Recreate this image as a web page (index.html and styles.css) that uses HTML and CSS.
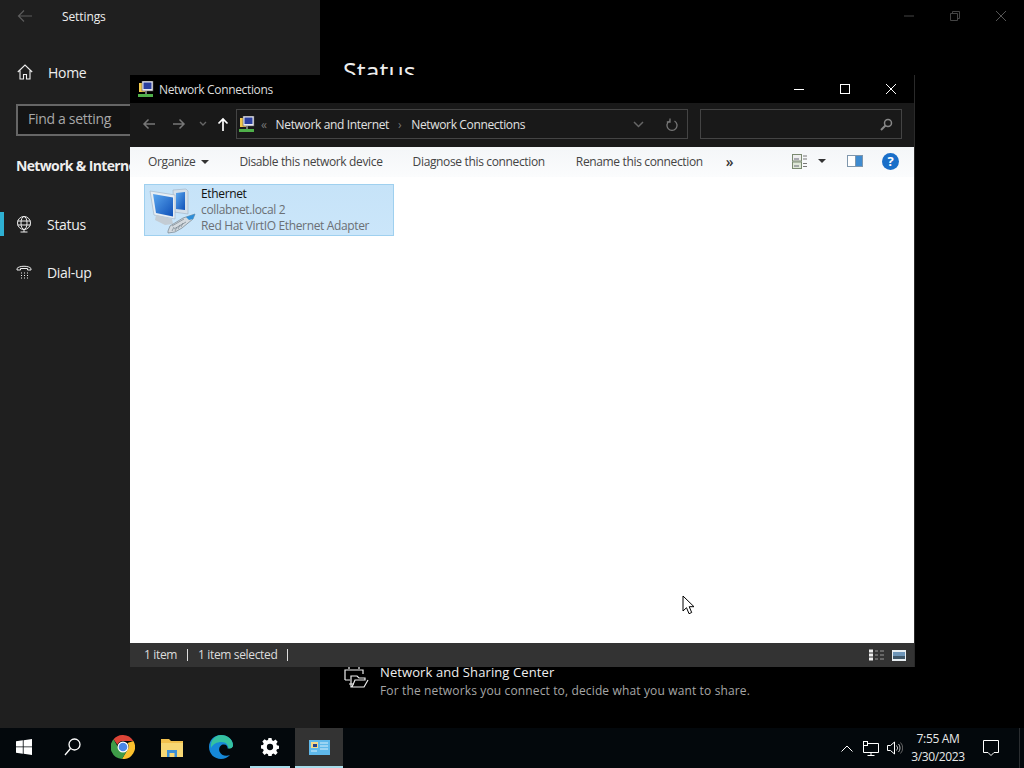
FILE: index.html
```html
<!DOCTYPE html>
<html lang="en">
<head>
  <meta charset="UTF-8">
  <title>Network Connections</title>
  <link rel="stylesheet" href="styles.css">
</head>
<body>
  <svg class="defs" width="0" height="0" aria-hidden="true">
    <defs>
      <symbol id="net-icon" viewBox="0 0 16 16">
        <rect x="1" y="2" width="6" height="9" fill="#f2c94c"/>
        <rect x="4" y="0" width="11" height="10" fill="#e8e8f0" stroke="#555" stroke-width=".6"/>
        <rect x="5.500" y="1.500" width="8" height="6.500" fill="#2b3f9e"/>
        <rect x="7" y="10" width="2" height="3" fill="#777"/>
        <rect x="0" y="13" width="15" height="3" fill="#4fb04a"/>
      </symbol>
      <linearGradient id="screen-blue" x1="0" y1="0" x2="1" y2="1">
        <stop offset="0" stop-color="#5aa6ee"/>
        <stop offset="1" stop-color="#0f50b8"/>
      </linearGradient>
    </defs>
  </svg>

  <!-- Settings window behind -->
  <div class="settings">
    <aside class="sidebar">
      <div class="settings-title">
        <svg class="back-arrow" width="16" height="14" viewBox="0 0 16 14"><path d="M15 7H2M7 1.500 1.500 7 7 12.500" fill="none" stroke="#5c5c5c" stroke-width="1.200"/></svg>
        <span>Settings</span>
      </div>
      <div class="home-link">
        <svg width="16" height="16" viewBox="0 0 16 16"><path d="M.8 8 8 1l7.200 7M3 6.500V15h3.500v-4.500h3V15H13V6.500" fill="none" stroke="#eee" stroke-width="1.100"/></svg>
        <span>Home</span>
      </div>
      <div class="find-box">Find a setting</div>
      <div class="side-heading">Network &amp; Internet</div>
      <div class="side-item side-item-active">
        <svg width="16" height="17" viewBox="0 0 16 17"><circle cx="8" cy="7" r="6.500" fill="none" stroke="#eee"/><ellipse cx="8" cy="7" rx="3" ry="6.500" fill="none" stroke="#eee"/><path d="M1.500 5h13M1.500 9h13M8 13.500V16M4.500 16h7" fill="none" stroke="#eee"/></svg>
        <span>Status</span>
      </div>
      <div class="side-item">
        <svg width="16" height="14" viewBox="0 0 16 14"><path d="M1 5V3.500C3 .5 13 .5 15 3.500V5h-3.500V3.500h-7V5Z" fill="none" stroke="#eee"/><path d="M5 8h1M8 8h1M11 8h1M5 10.500h1M8 10.500h1M11 10.500h1M5 13h1M8 13h1M11 13h1" stroke="#eee"/></svg>
        <span>Dial-up</span>
      </div>
    </aside>
    <main class="settings-main">
      <div class="win-controls-dim">
        <svg width="10" height="10" viewBox="0 0 10 10"><path d="M0 5h10" stroke="#444"/></svg>
        <svg width="10" height="10" viewBox="0 0 10 10"><path d="M.5 2.500h7v7h-7zM2.500 2.500v-2h7v7h-2" fill="none" stroke="#444"/></svg>
        <svg width="10" height="10" viewBox="0 0 10 10"><path d="m0 0 10 10M10 0 0 10" stroke="#555"/></svg>
      </div>
      <h1 class="status-title">Status</h1>
      <div class="sharing-link">
        <svg width="26" height="26" viewBox="0 0 26 26"><path d="M6 6V1h10v5M2 17V7h18v4M2 17h5M6 21h5" fill="none" stroke="#eee" stroke-width="1.200"/><path d="M8 13h6l2 2h6v2H12l-3 7H8ZM9 24h12l4-7" fill="none" stroke="#eee" stroke-width="1.200"/></svg>
        <div>
          <div class="sharing-name">Network and Sharing Center</div>
          <div class="sharing-desc">For the networks you connect to, decide what you want to share.</div>
        </div>
      </div>
    </main>
  </div>

  <!-- Explorer window on top -->
  <section class="explorer">
    <header class="ex-titlebar">
      <svg class="ex-icon" width="16" height="16"><use href="#net-icon"/></svg>
      <span class="ex-title">Network Connections</span>
      <div class="ex-controls">
        <svg width="12" height="12" viewBox="0 0 12 12"><path d="M1 6.500h10" stroke="#fff"/></svg>
        <svg width="12" height="12" viewBox="0 0 12 12"><rect x="1.500" y="1.500" width="9" height="9" fill="none" stroke="#fff"/></svg>
        <svg width="12" height="12" viewBox="0 0 12 12"><path d="m1 1 10 10M11 1 1 11" stroke="#fff"/></svg>
      </div>
    </header>

    <div class="ex-address">
      <div class="ex-nav">
        <svg width="14" height="12" viewBox="0 0 14 12"><path d="M13 6H2M6.500 1.500 2 6l4.500 4.500" fill="none" stroke="#777" stroke-width="1.500"/></svg>
        <svg width="14" height="12" viewBox="0 0 14 12"><path d="M1 6h11M7.500 1.500 12 6l-4.500 4.500" fill="none" stroke="#777" stroke-width="1.500"/></svg>
        <svg width="8" height="6" viewBox="0 0 8 6"><path d="m1 1 3 3 3-3" fill="none" stroke="#666" stroke-width="1.400"/></svg>
        <svg width="12" height="14" viewBox="0 0 12 14"><path d="M6 14V2M1.500 6.500 6 2l4.500 4.500" fill="none" stroke="#fff" stroke-width="1.700"/></svg>
      </div>
      <div class="ex-path">
        <svg width="16" height="16"><use href="#net-icon"/></svg>
        <span class="crumb-sep crumb-first">«</span>
        <span class="crumb">Network and Internet</span>
        <span class="crumb-sep">›</span>
        <span class="crumb">Network Connections</span>
        <svg class="path-chevron" width="11" height="7" viewBox="0 0 11 7"><path d="m1 1 4.500 4.500L10 1" fill="none" stroke="#666" stroke-width="1.500"/></svg>
        <svg class="path-refresh" width="12" height="13" viewBox="0 0 12 13"><path d="M3.500 3A5 5 0 1 0 8.500 3M4 .5V4H.8" fill="none" stroke="#777" stroke-width="1.300"/></svg>
      </div>
      <div class="ex-search">
        <svg width="13" height="13" viewBox="0 0 13 13"><circle cx="8" cy="5" r="3.500" fill="none" stroke="#888" stroke-width="1.500"/><path d="M5.500 7.500 1 12" stroke="#888" stroke-width="2"/></svg>
      </div>
    </div>

    <div class="ex-toolbar">
      <span class="tool tool-organize">Organize<i class="caret"></i></span>
      <span class="tool tool-disable">Disable this network device</span>
      <span class="tool tool-diagnose">Diagnose this connection</span>
      <span class="tool tool-rename">Rename this connection</span>
      <span class="tool-more">»</span>
      <div class="tool-icons">
        <svg width="15" height="15" viewBox="0 0 15 15"><rect x=".5" y=".5" width="9" height="6.500" fill="#eee" stroke="#7a8a70"/><rect x=".5" y="8" width="9" height="6.500" fill="#dfe8d8" stroke="#7a8a70"/><path d="M11 2h4M11 5h4M11 9.500h4M11 12.500h4" stroke="#777"/><path d="M2 5h5M2 12h5" stroke="#667"/></svg>
        <i class="caret caret-view"></i>
        <svg class="pane-icon" width="16" height="12" viewBox="0 0 16 12"><rect width="16" height="12" fill="#7f97ad"/><rect x="1" y="1" width="7" height="10" fill="#fff"/><rect x="9" y="1" width="6" height="10" fill="#3f8bd0"/></svg>
        <svg class="help-icon" width="17" height="17" viewBox="0 0 17 17"><circle cx="8.500" cy="8.500" r="8.500" fill="#1a6fc9"/><text x="8.500" y="13" text-anchor="middle" class="help-mark">?</text></svg>
      </div>
    </div>

    <div class="ex-content">
      <div class="conn-item">
        <svg class="conn-icon" width="48" height="48" viewBox="0 0 48 48">
          <path d="M25 4 38 3l2 2v23l-14-2Z" fill="#d5e0ea" stroke="#9db0c2" stroke-width=".6"/>
          <path d="M28 7 37 6v18l-9-1Z" fill="url(#screen-blue)"/>
          <path d="M2 5 27 9v24L6 29Z" fill="#e6edf3" stroke="#9db0c2" stroke-width=".6"/>
          <path d="M5 8 25 11.500v19L8 27Z" fill="url(#screen-blue)"/>
          <path d="M8 29 24 33l1 5-8 1-10-5Z" fill="#c3ccd4"/>
          <path d="M20 45 22 40 35 32l9-3 3-1-2 5-11 9-7 4-7 1Z" fill="#d4dadf" stroke="#76828c" stroke-width=".7"/>
          <path d="M24 40 36 33M26 43 38 36M24 45l2-4M27 45l2-4M30 43l2-4M33 41l2-4" stroke="#76828c" stroke-width=".7" fill="none"/>
          <path d="m38 31 9-3-2 5-4 1Z" fill="#2f8fd8"/>
        </svg>
        <div class="conn-text">
          <div class="conn-name">Ethernet</div>
          <div class="conn-line">collabnet.local 2</div>
          <div class="conn-line">Red Hat VirtIO Ethernet Adapter</div>
        </div>
      </div>
    </div>

    <footer class="ex-status">
      <span class="status-count">1 item</span>
      <span class="status-selected">1 item selected</span>
      <i class="status-end"></i>
      <div class="status-views">
        <svg width="16" height="12" viewBox="0 0 16 12"><path d="M0 .5h4v3H0zM0 4.500h4v3H0zM0 8.500h4v3H0z" fill="#eee"/><path d="M6 2h3M11 2h4M6 6h3M11 6h4M6 10h3M11 10h4" stroke="#999"/></svg>
        <svg width="14" height="11" viewBox="0 0 14 11"><rect width="14" height="11" fill="#e8eef2"/><rect x="1" y="2" width="12" height="4" fill="#6d95b8"/><rect x="1" y="6" width="12" height="3" fill="#3e5668"/></svg>
      </div>
    </footer>
  </section>

  <svg class="mouse-cursor" width="13" height="20" viewBox="0 0 13 20"><path d="M1 1v15l3.500-3.300 2.500 6 2.700-1.200-2.500-5.800H12Z" fill="#fff" stroke="#000"/></svg>

  <!-- Taskbar -->
  <nav class="taskbar">
    <div class="task-slot">
      <svg width="16" height="16" viewBox="0 0 16 16"><path d="M0 2.300 6.800 1.300V7.500H0ZM7.600 1.200 16 0V7.500H7.600ZM0 8.300H6.800V14.700L0 13.700ZM7.600 8.300H16V16L7.600 14.800Z" fill="#fff"/></svg>
    </div>
    <div class="task-slot">
      <svg width="17" height="18" viewBox="0 0 17 18"><circle cx="10.500" cy="6.500" r="5.500" fill="none" stroke="#fff" stroke-width="1.300"/><path d="M6.500 10.500 1 17" stroke="#fff" stroke-width="1.300"/></svg>
    </div>
    <div class="task-slot slot-chrome">
      <svg width="24" height="24" viewBox="0 0 24 24">
        <path d="M12 0a12 12 0 0 1 10.400 6H12a6 6 0 0 0-5.600 3.800L2.500 4.300A12 12 0 0 1 12 0Z" fill="#dc4437"/>
        <path d="M22.400 6A12 12 0 0 1 11 24l5.200-8.800A6 6 0 0 0 16.500 8Z" fill="#fbc02d"/>
        <path d="M11 24A12 12 0 0 1 2.500 4.300l5 8.700a6 6 0 0 0 8.700 2.200Z" fill="#3f9c48"/>
        <circle cx="12" cy="12" r="5.500" fill="#fff"/><circle cx="12" cy="12" r="4.300" fill="#4a86e8"/>
      </svg>
    </div>
    <div class="task-slot slot-folder">
      <svg width="22" height="19" viewBox="0 0 22 19"><path d="M0 1h8l2 2h12v16H0Z" fill="#f2c14e"/><path d="M0 5h22v14H0Z" fill="#f7d774"/><path d="M6 12h10v7h-2.500v-4h-5v4H6Z" fill="#3d8fd6"/></svg>
    </div>
    <div class="task-slot slot-edge">
      <svg width="24" height="24" viewBox="0 0 24 24">
        <path d="M12 0C5 0 0 5.500 0 12c0 7 5.500 12 12 12 3.500 0 6.500-1.200 9-4-4 1.500-9 .5-10.500-3.500C9.500 13.500 11 10 14 9.500c3-.5 5 1.500 4.500 4 2.500-.5 5.500-1 5.500-3C24 4.500 18.500 0 12 0Z" fill="#1688d8"/>
        <path d="M12 0c6.500 0 12 4.500 12 10.500 0 2-2 3.300-4.500 3.300 0-4-2.500-6.800-7-6.800C8 7 4 9 2 13 1 5.500 6 0 12 0Z" fill="#35c1a0"/>
      </svg>
    </div>
    <div class="task-slot slot-open">
      <svg width="18" height="18" viewBox="0 0 20 20"><path d="M8.300 0h3.400l.5 2.600 1.700.7 2.200-1.500 2.400 2.400-1.500 2.200.7 1.700 2.600.5v3.400l-2.600.5-.7 1.700 1.500 2.200-2.400 2.400-2.200-1.500-1.700.7-.5 2.600H8.300l-.5-2.600-1.700-.7-2.200 1.500L1.500 16l1.500-2.200-.7-1.700L-.3 11.600V8.200l2.600-.5.700-1.700L1.500 3.800l2.400-2.400 2.200 1.500 1.700-.7ZM10 6.500a3.500 3.500 0 1 0 0 7 3.500 3.500 0 0 0 0-7Z" fill="#fff" fill-rule="evenodd"/></svg>
    </div>
    <div class="task-slot slot-active">
      <svg width="21" height="15" viewBox="0 0 21 15"><rect width="21" height="15" fill="#5fb8ea"/><rect x="2" y="2" width="7" height="6" fill="#f3d98a"/><rect x="4" y="4" width="4" height="3" fill="#24408a"/><path d="M11 3h8M11 6h8M11 9h8M2 11h6" stroke="#d8effb"/></svg>
    </div>
    <div class="tray">
      <svg width="12" height="7" viewBox="0 0 12 7"><path d="m.5 6.500 5.500-5.500 5.500 5.500" fill="none" stroke="#fff"/></svg>
      <svg width="16" height="15" viewBox="0 0 16 15"><path d="M4.500 2.500h11v9h-15V5M8 11.500v3M4.500 14.500h7" fill="none" stroke="#fff"/><rect x=".5" y=".5" width="4" height="4" fill="none" stroke="#fff"/></svg>
      <svg width="16" height="14" viewBox="0 0 16 14"><path d="M.5 4.500h3L7.500 1v12l-4-3.500h-3Z" fill="none" stroke="#fff"/><path d="M9.500 4.500a3.500 3.500 0 0 1 0 5M11.500 3a6 6 0 0 1 0 8" fill="none" stroke="#bbb"/><path d="M13.500 1.500a8 8 0 0 1 0 11" fill="none" stroke="#666"/></svg>
      <div class="clock">
        <div>7:55 AM</div>
        <div>3/30/2023</div>
      </div>
      <svg class="notify" width="16" height="16" viewBox="0 0 16 16"><path d="M.5.500h15v12h-4.500L8 15.500 5 12.500H.5Z" fill="none" stroke="#fff"/></svg>
      <i class="show-desktop"></i>
    </div>
  </nav>
</body>
</html>
```

FILE: styles.css
```css
* {
  box-sizing: border-box;
}

body {
  margin: 0;
  width: 1024px;
  height: 768px;
  overflow: hidden;
  position: relative;
  display: flex;
  flex-direction: column;
  background: #000;
  font-family: "Open Sans", "Noto Sans", sans-serif;
  color: #eee;
}

.defs {
  position: absolute;
}

/* Settings window */
.settings {
  flex: 1;
  display: flex;
  min-height: 0;
}

.sidebar {
  width: 320px;
  background: #1f1f1f;
  letter-spacing: -.3px;
}

.settings-title {
  display: flex;
  align-items: center;
  height: 32px;
  padding-left: 17px;
  font-size: 12px;
  letter-spacing: -.1px;
}

.back-arrow {
  margin-right: 29px;
}

.home-link {
  display: flex;
  align-items: center;
  gap: 15px;
  margin-top: 31px;
  padding-left: 17px;
  height: 18px;
  font-size: 14px;
}

.find-box {
  width: 288px;
  height: 32px;
  margin: 23px 0 0 16px;
  padding: 0 10px;
  border: 2px solid #666;
  background: #141414;
  color: #a8a8a8;
  font-size: 14px;
  line-height: 26px;
}

.side-heading {
  margin: 20px 0 0 16px;
  font-size: 14px;
  font-weight: 700;
  line-height: 20px;
  letter-spacing: -.65px;
}

.side-item {
  display: flex;
  align-items: center;
  gap: 15px;
  height: 24px;
  margin-top: 24px;
  padding-left: 16px;
  font-size: 14px;
  position: relative;
}

.side-item-active {
  margin-top: 36px;
}

.side-item-active::before {
  content: "";
  position: absolute;
  left: 0;
  top: 0;
  width: 4px;
  height: 24px;
  background: #2eb0d2;
}

.settings-main {
  flex: 1;
  display: flex;
  flex-direction: column;
  padding-left: 23px;
  padding-bottom: 27px;
  background: #000;
}

.win-controls-dim {
  display: flex;
  justify-content: flex-end;
  align-items: center;
  gap: 36px;
  height: 32px;
  padding-right: 18px;
}

.status-title {
  margin: 21px 0 0;
  font-size: 25px;
  font-weight: 400;
  line-height: 36px;
}

.sharing-link {
  display: flex;
  align-items: flex-start;
  gap: 11px;
  margin-top: auto;
}

.sharing-name {
  font-size: 13px;
  line-height: 18px;
  letter-spacing: .1px;
}

.sharing-desc {
  font-size: 12px;
  line-height: 20px;
  letter-spacing: .14px;
  color: #a6a6a6;
}

/* Explorer window */
.explorer {
  position: absolute;
  left: 130px;
  top: 75px;
  width: 785px;
  height: 592px;
  display: flex;
  flex-direction: column;
  background: #fff;
  border-right: 1px solid #2a2a2a;
  letter-spacing: -.35px;
}

.ex-titlebar {
  display: flex;
  align-items: center;
  height: 28px;
  padding-left: 8px;
  background: #000;
}

.ex-title {
  margin-left: 5px;
  font-size: 12px;
  color: #ddd;
}

.ex-controls {
  display: flex;
  gap: 34px;
  margin-left: auto;
  padding-right: 17px;
}

.ex-address {
  display: flex;
  align-items: center;
  height: 44px;
  padding-bottom: 2px;
  background: #191919;
}

.ex-nav {
  display: flex;
  align-items: center;
  width: 106px;
  padding-left: 12px;
}

.ex-nav svg:nth-child(2) {
  margin-left: 16px;
}

.ex-nav svg:nth-child(3) {
  margin-left: 13px;
}

.ex-nav svg:nth-child(4) {
  margin-left: 10px;
}

.ex-path {
  display: flex;
  align-items: center;
  width: 452px;
  height: 30px;
  padding-left: 2px;
  border: 1px solid #444;
  font-size: 12px;
  color: #e2e2e2;
}

.crumb-sep {
  margin: 0 10px 0 9px;
  color: #777;
}

.crumb-first {
  margin: 0 9px 0 6px;
}

.path-chevron {
  margin-left: auto;
}

.path-refresh {
  margin: 0 9px 0 22px;
}

.ex-search {
  display: flex;
  align-items: center;
  justify-content: flex-end;
  width: 202px;
  height: 30px;
  margin-left: 12px;
  padding-right: 8px;
  border: 1px solid #444;
}

.ex-toolbar {
  display: flex;
  align-items: center;
  height: 30px;
  padding-bottom: 2px;
  background: linear-gradient(#f4f6f8, #fbfcfd);
  font-size: 12px;
  color: #444;
}

.tool-organize {
  margin-left: 18px;
}

.caret {
  display: inline-block;
  margin-left: 6px;
  vertical-align: 2px;
  border-style: solid;
  border-width: 4px 4px 0;
  border-color: #333 transparent transparent;
}

.tool-disable {
  margin-left: 30px;
}

.tool-diagnose {
  margin-left: 30px;
}

.tool-rename {
  margin-left: 31px;
}

.tool-more {
  margin-left: 23px;
  font-size: 14px;
  font-weight: 600;
  color: #333;
}

.tool-icons {
  display: flex;
  align-items: center;
  margin-left: auto;
  padding-right: 15px;
}

.caret-view {
  margin-left: 11px;
  vertical-align: 0;
}

.pane-icon {
  margin-left: 21px;
}

.help-icon {
  margin-left: 19px;
}

.help-mark {
  font-size: 13px;
  font-weight: 700;
  fill: #fff;
}

.ex-content {
  flex: 1;
  padding: 7px 0 0 14px;
  background: #fff;
}

.conn-item {
  display: flex;
  align-items: center;
  width: 250px;
  height: 52px;
  padding-left: 3px;
  border: 1px solid #9fd0ef;
  background: linear-gradient(#c6e3f8, #cbe6fa);
}

.conn-text {
  margin-left: 5px;
  font-size: 12px;
  line-height: 16px;
  color: #6b7075;
}

.conn-name {
  color: #111;
}

.ex-status {
  display: flex;
  align-items: center;
  height: 24px;
  padding: 0 8px 0 14px;
  background: #333;
  font-size: 12px;
  line-height: 12px;
  color: #ddd;
}

.status-count {
  padding-right: 10px;
  border-right: 1px solid #ddd;
}

.status-selected {
  margin-left: 10px;
}

.status-end {
  width: 1px;
  height: 12px;
  margin-left: 10px;
  background: #ddd;
}

.status-views {
  display: flex;
  align-items: center;
  gap: 7px;
  margin-left: auto;
}

.mouse-cursor {
  position: absolute;
  left: 682px;
  top: 595px;
}

/* Taskbar */
.taskbar {
  display: flex;
  align-items: center;
  height: 40px;
  background: #03080c;
}

.task-slot {
  display: flex;
  align-items: center;
  justify-content: center;
  width: 48px;
  height: 40px;
  border-bottom: 2px solid transparent;
}

.slot-chrome {
  margin-left: 3px;
}

.slot-folder {
  width: 49px;
}

.slot-edge {
  margin-left: 1px;
}

.slot-open {
  width: 40px;
  margin: 0 5px;
  border-bottom-color: #a8dcea;
}

.slot-active {
  background: #333;
  border-bottom-color: #a8dcea;
}

.tray {
  display: flex;
  align-items: center;
  flex: 1;
  padding-left: 498px;
}

.tray svg:nth-child(2) {
  margin-left: 10px;
}

.tray svg:nth-child(3) {
  margin-left: 8px;
}

.clock {
  width: 72px;
  margin-left: -1px;
  text-align: center;
  font-size: 12px;
  line-height: 18px;
  letter-spacing: -.35px;
  color: #e8e8e8;
}

.notify {
  margin-left: 9px;
}

.show-desktop {
  width: 1px;
  height: 40px;
  margin-left: 20px;
  background: #2a2d30;
}
```
